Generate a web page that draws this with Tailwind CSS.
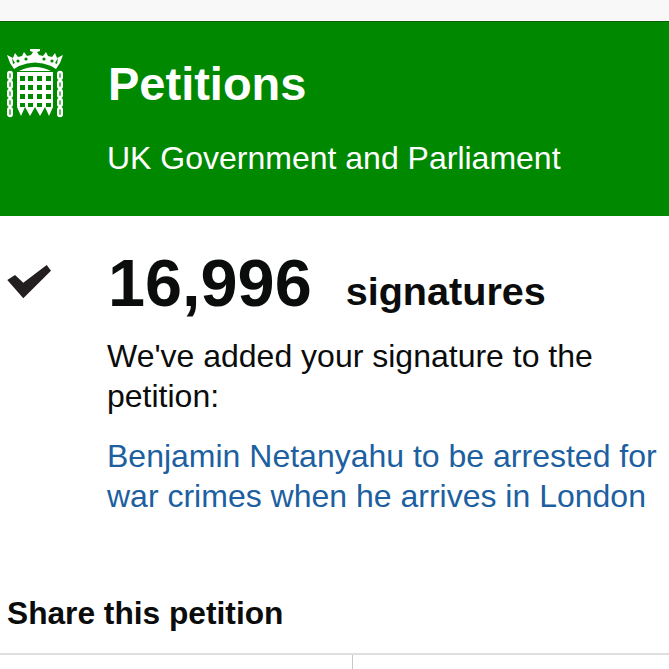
<!DOCTYPE html>
<html>
<head>
  <title>Petitions</title>
  <script src="https://cdn.jsdelivr.net/npm/@tailwindcss/browser@4"></script>
</head>
<body class="bg-white h-[669px] overflow-hidden font-['Liberation_Sans',Arial,sans-serif]">
  <div class="h-[21px] bg-[#f8f8f8]"></div>

  <!-- Green header -->
  <header class="h-[195px] bg-[#008800] border-t border-[#0b5c0b] flex text-white">
    <div class="w-[108px] pl-[7px] pt-[27px] shrink-0">
      <svg width="56" height="69" viewBox="0 0 56 69" fill="#fff">
        <!-- crown -->
        <path d="M0 6 L6 9 L8 4 L11 8 L15 7 L17 3 L20 7 L24 6 L26 3 L23 2 V0 H33 V2 L30 3 L32 6 L36 7 L39 3 L41 7 L45 8 L48 4 L50 9 L56 6 L53 14 L49 20 L44 17 Q28 10 12 17 L7 20 L3 14 Z"/>
        <g fill="#008800">
          <circle cx="11" cy="12" r="1.6"/>
          <circle cx="19" cy="10" r="1.6"/>
          <circle cx="37" cy="10" r="1.6"/>
          <circle cx="45" cy="12" r="1.6"/>
          <path d="M5 9 L8 14 L6 15 Z"/>
          <path d="M51 9 L48 14 L50 15 Z"/>
        </g>
        <path d="M12 22 Q28 14 44 22 Z"/>
        <!-- portcullis -->
        <path fill-rule="evenodd" d="M10 23H46V58L42 67L38 58L33 67L28 58L23 67L18 58L14 67L10 58Z M13 27V32H18V27Z M21 27V32H26V27Z M30 27V32H35V27Z M39 27V32H44V27Z M13 36V41H18V36Z M21 36V41H26V36Z M30 36V41H35V36Z M39 36V41H44V36Z M13 45V50H18V45Z M21 45V50H26V45Z M30 45V50H35V45Z M39 45V50H44V45Z M13 54V58H18V54Z M21 54V58H26V54Z M30 54V58H35V54Z M39 54V58H44V54Z"/>
        <!-- chains -->
        <g fill="none" stroke="#fff" stroke-width="2.4">
          <rect x="1.2" y="23" width="3.6" height="7" rx="1.8"/>
          <rect x="1.2" y="32" width="3.6" height="7" rx="1.8"/>
          <rect x="1.2" y="41" width="3.6" height="7" rx="1.8"/>
          <rect x="1.2" y="50" width="3.6" height="7" rx="1.8"/>
          <rect x="1.2" y="59" width="3.6" height="8" rx="1.8"/>
          <rect x="51.2" y="23" width="3.6" height="7" rx="1.8"/>
          <rect x="51.2" y="32" width="3.6" height="7" rx="1.8"/>
          <rect x="51.2" y="41" width="3.6" height="7" rx="1.8"/>
          <rect x="51.2" y="50" width="3.6" height="7" rx="1.8"/>
          <rect x="51.2" y="59" width="3.6" height="8" rx="1.8"/>
        </g>
      </svg>
    </div>
    <div>
      <div class="text-[47px] leading-[54px] font-bold mt-[35px]">Petitions</div>
      <div class="text-[32px] leading-[36px] mt-[29px] -ml-px">UK Government and Parliament</div>
    </div>
  </header>

  <!-- Signature confirmation -->
  <section class="flex">
    <div class="w-[108px] pl-[7px] pt-[49px] shrink-0">
      <svg width="45" height="34" viewBox="0 0 45 34" fill="#231f20">
        <path d="M0.3 15 L8 10 L16.3 17.7 L39.7 0 L44 5.7 L16.3 33.3 Z"/>
      </svg>
    </div>
    <div class="text-[#0b0c0c]">
      <div class="flex items-baseline mt-[30px]">
        <span class="text-[66.6px] leading-[74px] font-bold">16,996</span>
        <span class="text-[39.6px] leading-[44px] font-bold ml-[34px] -translate-y-px">signatures</span>
      </div>
      <p class="text-[32px] leading-[40px] mt-[16px] w-[555px] -ml-px">We've added your signature to the petition:</p>
      <a href="#" class="block text-[32px] leading-[40px] mt-[20px] text-[#1d5fa0] w-[561px] -ml-px">Benjamin Netanyahu to be arrested for war crimes when he arrives in London</a>
    </div>
  </section>

  <!-- Share -->
  <h2 class="text-[31.7px] leading-[36px] font-bold text-[#0b0c0c] pl-[7px] mt-[79px]">Share this petition</h2>
  <div class="mt-[22px] border-t-2 border-[#dedede] flex h-[30px]">
    <div class="w-[353px] border-r border-[#c8c8c8]"></div>
  </div>
</body>
</html>
